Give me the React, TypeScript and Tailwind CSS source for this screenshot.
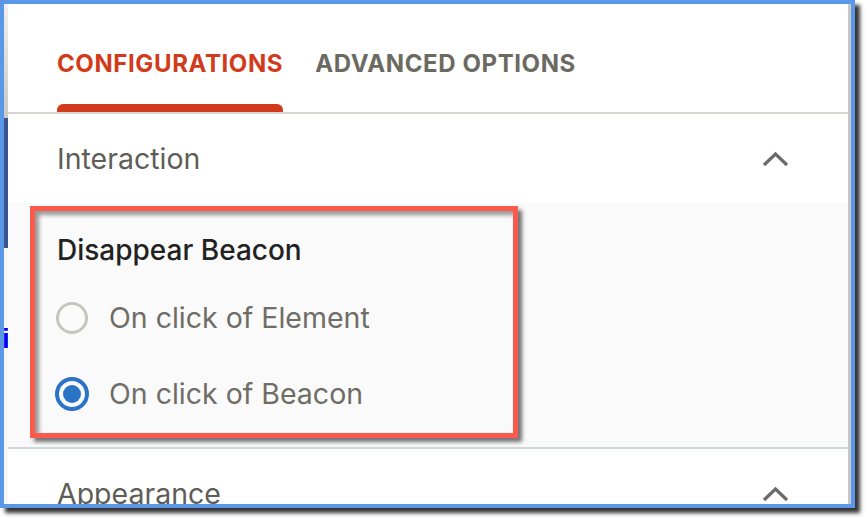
import React from "react";

function Chevron() {
  return (
    <svg width="27" height="16" viewBox="0 0 27 16" className="shrink-0">
      <polyline points="2,14 13.5,3 25,14" fill="none" stroke="#6b6b6b" strokeWidth="3.2" strokeLinecap="butt" strokeLinejoin="miter" />
    </svg>
  );
}

function Radio({ checked, label }: { checked: boolean; label: string }) {
  return (
    <div className="flex items-center h-[34px]">
      <div className="w-[34px] h-[34px] flex items-center justify-center shrink-0">
        {checked ? (
          <div className="w-[34px] h-[34px] rounded-full border-[4px] border-[#2b73c6] flex items-center justify-center">
            <div className="w-[18px] h-[18px] rounded-full bg-[#2b73c6]" />
          </div>
        ) : (
          <div className="w-[32px] h-[32px] rounded-full border-[3px] border-[#c6c6bf]" />
        )}
      </div>
      <span className="ml-[20px] text-[28.5px] leading-[28px] text-[#6f6d66] whitespace-nowrap">{label}</span>
    </div>
  );
}

function SectionHeader({ title }: { title: string }) {
  return (
    <div className="h-[89px] shrink-0 flex items-center justify-between pl-[49px] pr-[59px] bg-white">
      <span className="text-[28.5px] leading-[28px] text-[#5e5d56] whitespace-nowrap">{title}</span>
      <Chevron />
    </div>
  );
}

export default function App() {
  return (
    <div className="w-[866px] h-[518px] bg-white relative overflow-hidden font-['Inter','Noto_Sans',sans-serif]">
      <div className="w-[855px] h-[508px] border-[4px] border-[#5a97e7] shadow-[5px_5px_4px_rgba(0,0,0,0.8)] flex overflow-hidden">
        <div className="w-[4px] shrink-0 flex flex-col overflow-hidden">
          <div className="h-[114px] bg-gradient-to-b from-[#efefef] to-[#c9c9c9]" />
          <div className="h-[130px] bg-[#3b5590]" />
          <div className="flex-1 bg-[#f6f6f6] overflow-hidden">
            <div className="mt-[77px] -ml-[2px] text-[28px] leading-[28px] font-bold text-[#0000f0] font-['Liberation_Sans',sans-serif]">i</div>
          </div>
        </div>
        <div className="flex-1 flex flex-col overflow-hidden bg-white">
          <div className="h-[110px] shrink-0 flex pl-[49px] gap-[32px] border-b-2 border-[#d6d6d0]">
            <div className="flex flex-col pt-[48px]">
              <span className="text-[24px] leading-[24px] font-bold tracking-[0.6px] text-[#d13b1b] whitespace-nowrap">CONFIGURATIONS</span>
              <div className="mt-[28px] h-[8px] rounded-t-[6px] bg-[#d13b1b]" />
            </div>
            <div className="flex flex-col pt-[48px]">
              <span className="text-[24px] leading-[24px] font-bold tracking-[0.6px] text-[#6b6a61] whitespace-nowrap">ADVANCED OPTIONS</span>
              <div className="mt-[28px] h-[8px]" />
            </div>
          </div>
          <SectionHeader title="Interaction" />
          <div className="shrink-0 bg-[#fafafa] pl-[47px] pt-[33px] pb-[36px] border-b-2 border-[#cdd9d9]">
            <div className="pl-[2px] text-[28px] leading-[28px] font-medium text-[#222222] whitespace-nowrap">Disappear Beacon</div>
            <div className="mt-[37px] flex flex-col gap-[42px]">
              <Radio checked={false} label="On click of Element" />
              <Radio checked={true} label="On click of Beacon" />
            </div>
          </div>
          <SectionHeader title="Appearance" />
        </div>
        <div className="w-[3px] shrink-0 bg-[#c8c8c8]" />
      </div>
      <div className="absolute left-[30px] top-[206px] w-[488px] h-[232px] border-[5px] border-[#fd5a4e] shadow-[4px_4px_4px_rgba(0,0,0,0.55),inset_4px_4px_4px_rgba(0,0,0,0.4)]" />
    </div>
  );
}
